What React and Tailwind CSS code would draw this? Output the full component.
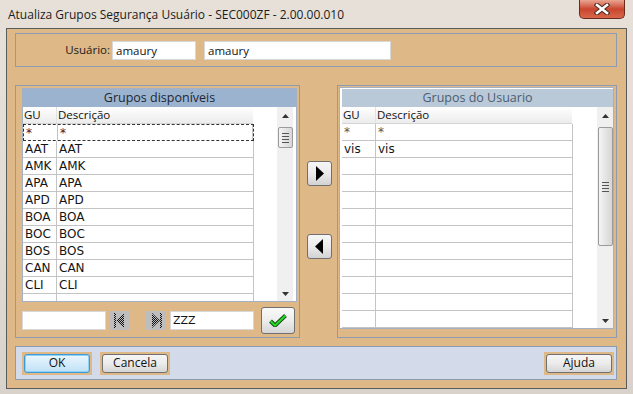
import React from "react";

const ui = { fontFamily: '"Open Sans", "Noto Sans", sans-serif' };
const mono = { fontFamily: '"DejaVu Sans", Verdana, sans-serif' };

function ScrollBar({ thumbTop, thumbH }) {
  return (
    <div className="w-[16px] h-full bg-[#f0f0f0] flex flex-col items-center">
      <div className="h-[18px] w-full flex items-center justify-center">
        <svg width="7" height="4" viewBox="0 0 7 4">
          <path d="M0 4 L3.5 0 L7 4 Z" fill="#333" />
        </svg>
      </div>
      <div
        className="w-[15px] rounded-[2px] border border-[#9a9a9a] bg-gradient-to-r from-[#f4f4f4] to-[#d6d6d6] flex flex-col items-center justify-center gap-[2px]"
        style={{ marginTop: thumbTop, height: thumbH }}
      >
        <div className="w-[7px] h-px bg-[#555]" />
        <div className="w-[7px] h-px bg-[#555]" />
        <div className="w-[7px] h-px bg-[#555]" />
        <div className="w-[7px] h-px bg-[#555]" />
      </div>
      <div className="flex-1" />
      <div className="h-[14px] w-full flex items-center justify-center">
        <svg width="7" height="4" viewBox="0 0 7 4">
          <path d="M0 0 L3.5 4 L7 0 Z" fill="#333" />
        </svg>
      </div>
    </div>
  );
}

function GridTable({ rows, count, focusFirst, muted }) {
  const list = [];
  for (let i = 0; i < count; i++) list.push(rows[i] || "");
  return (
    <div className="w-[254px] h-full flex flex-col overflow-hidden">
      <div
        className="h-[17px] shrink-0 flex w-[230px] bg-gradient-to-b from-white to-[#ececec] border-b border-[#d5d5d5] text-[11.5px] text-[#111] leading-[16px]"
        style={ui}
      >
        <div className="w-[34px] pl-[1px] border-r border-[#e2e2e2]">GU</div>
        <div className="pl-[1px]">Descrição</div>
      </div>
      {list.map((r, i) => (
        <div
          key={i}
          className={
            "h-[17px] shrink-0 flex w-[231px] border-b border-[#c4c4c4] text-[12px] leading-[16px] " +
            (i === 0 && focusFirst
              ? "border-t border-l border-r border-dashed border-t-[#333] border-l-[#333] border-r-[#333] border-b-[#333] text-[#4a1030]"
              : i === 0 && muted
              ? "text-[#555]"
              : "text-[#141414]")
          }
          style={mono}
        >
          <div className="w-[34px] pl-[2px] border-r border-[#c4c4c4]">{r}</div>
          <div className="flex-1 pl-[2px] border-r border-[#c4c4c4]">{r}</div>
        </div>
      ))}
    </div>
  );
}

function NavIcon({ dir }) {
  const id = "dots" + dir;
  return (
    <svg width="20" height="19" viewBox="0 0 20 19">
      <defs>
        <pattern id={id} width="2" height="2" patternUnits="userSpaceOnUse">
          <rect x="0" y="0" width="1" height="1" fill="#111" />
          <rect x="1" y="1" width="1" height="1" fill="#111" />
        </pattern>
      </defs>
      {dir === "first" ? (
        <g fill={"url(#" + id + ")"}>
          <rect x="4" y="2" width="2" height="15" />
          <path d="M14 2 L6 9.5 L14 17 Z" />
        </g>
      ) : (
        <g fill={"url(#" + id + ")"}>
          <rect x="14" y="2" width="2" height="15" />
          <path d="M6 2 L14 9.5 L6 17 Z" />
        </g>
      )}
    </svg>
  );
}

function WinButton({ children, focused }) {
  return (
    <div className="w-[70px] h-[23px] p-[2px] bg-[#deb887]">
      <div
        className={
          "w-full h-full rounded-[3px] border flex items-center justify-center text-[12px] text-[#111] " +
          (focused
            ? "border-[#3c9bd6] bg-gradient-to-b from-[#eaf6fd] to-[#bfe2f6] shadow-[inset_0_0_0_1px_#8fd2f5]"
            : "border-[#707070] bg-gradient-to-b from-[#f6f6f6] via-[#ebebeb] to-[#d6d6d6]")
        }
        style={ui}
      >
        {children}
      </div>
    </div>
  );
}

function ArrowButton({ dir }) {
  return (
    <div className="w-[25px] h-[25px] rounded-[3px] border border-[#707070] bg-gradient-to-b from-[#f6f6f6] via-[#ebebeb] to-[#d2d2d2] flex items-center justify-center">
      <svg width="9" height="15" viewBox="0 0 9 15">
        {dir === "right" ? (
          <path d="M1 0 L9 7.5 L1 15 Z" fill="#000" />
        ) : (
          <path d="M8 0 L0 7.5 L8 15 Z" fill="#000" />
        )}
      </svg>
    </div>
  );
}

export default function App() {
  const leftRows = ["*", "AAT", "AMK", "APA", "APD", "BOA", "BOC", "BOS", "CAN", "CLI"];
  const rightRows = ["*", "vis"];

  return (
    <div
      className="w-[633px] h-[394px] overflow-hidden bg-gradient-to-b from-[#e6e0d8] via-[#e3ddd5] to-[#d8d2ca] flex flex-col"
      style={ui}
    >
      {/* Title bar */}
      <div className="h-[28px] flex justify-between shrink-0">
        <div className="pl-[8px] pt-[6px] text-[12px] text-[#1c1c1c]">
          Atualiza Grupos Segurança Usuário - SEC000ZF - 2.00.00.010
        </div>
        <div className="mr-[8px] w-[46px] h-[19px] rounded-b-[5px] border border-t-0 border-[#6b2a1c] bg-gradient-to-b from-[#e9a592] via-[#c9452f] to-[#d8674a] flex items-center justify-center">
          <svg width="16" height="12" viewBox="0 0 16 12">
            <path d="M3 2 L13 10 M13 2 L3 10" stroke="#4a2a22" strokeWidth="4.6" strokeLinecap="square" />
            <path d="M3 2 L13 10 M13 2 L3 10" stroke="#ffffff" strokeWidth="2.6" strokeLinecap="square" />
          </svg>
        </div>
      </div>

      {/* Client area */}
      <div className="ml-[6px] w-[621px] h-[361px] border border-[#5b5b5b] bg-[#deb887] flex flex-col pl-[8px] pt-[4px]">
        {/* Usuario box */}
        <div className="w-[602px] h-[34px] border border-[#8d9bb1] flex items-center">
          <div className="w-[96px] text-right pr-[2px] text-[11.5px] text-[#1a1a1a]">Usuário:</div>
          <div className="w-[84px] h-[19px] bg-white border border-[#d7d7d7] text-[11.5px] pl-[3px] leading-[17px] text-[#111]">
            amaury
          </div>
          <div className="ml-[8px] w-[187px] h-[19px] bg-white border border-[#d7d7d7] text-[11.5px] pl-[3px] leading-[17px] text-[#111]">
            amaury
          </div>
        </div>

        {/* Main */}
        <div className="mt-[18px] flex h-[253px]">
          {/* Left group */}
          <div className="w-[285px] h-full border border-[#8d9bb1] pl-[6px] pr-[2px] pt-[2px] flex flex-col">
            <div className="w-[275px] h-[214px] border border-[#a4b1c4] bg-white flex flex-col">
              <div className="h-[18px] shrink-0 bg-[#9cb3cf] text-center text-[12.5px] leading-[18px] text-[#1c2634]">
                Grupos disponíveis
              </div>
              <div className="flex-1 flex overflow-hidden">
                <GridTable rows={leftRows} count={11} focusFirst />
                <div className="w-[3px]" />
                <ScrollBar thumbTop={2} thumbH={21} />
                <div className="w-[3px]" />
              </div>
            </div>
            <div className="mt-[5px] flex items-center">
              <div className="w-[84px] h-[19px] bg-white border border-[#d7d7d7]" />
              <div className="ml-[4px] w-[20px] h-[19px] bg-[#bdbdbd] flex items-center justify-center">
                <NavIcon dir="first" />
              </div>
              <div className="ml-[16px] w-[20px] h-[19px] bg-[#bdbdbd] flex items-center justify-center">
                <NavIcon dir="last" />
              </div>
              <div className="ml-[4px] w-[84px] h-[19px] bg-white border border-[#d7d7d7] text-[11px] pl-[2px] leading-[17px] text-[#111]" style={mono}>
                ZZZ
              </div>
              <div className="ml-[7px] w-[34px] h-[27px] rounded-[3px] border border-[#707070] bg-gradient-to-b from-[#fafafa] via-[#ededed] to-[#d6d6d6] flex items-center justify-center">
                <svg width="18" height="13" viewBox="0 0 18 13">
                  <path d="M1.5 7 L6 11.5 L16.5 1.5" fill="none" stroke="#1d4a1d" strokeWidth="4" strokeLinejoin="round" />
                  <path d="M1.5 7 L6 11.5 L16.5 1.5" fill="none" stroke="#22dd22" strokeWidth="2" strokeLinejoin="round" />
                </svg>
              </div>
            </div>
          </div>

          {/* Middle arrows */}
          <div className="w-[37px] pl-[7px] pt-[76px] flex flex-col gap-[48px]">
            <ArrowButton dir="right" />
            <ArrowButton dir="left" />
          </div>

          {/* Right group */}
          <div className="w-[280px] h-full border border-[#8d9bb1] pl-[1px] pt-[1px]">
            <div className="w-[275px] h-[242px] border border-[#a4b1c4] bg-white flex flex-col pl-[2px] pt-[1px]">
              <div className="h-[18px] shrink-0 bg-[#b9c9d8] text-center text-[12.5px] leading-[18px] text-[#4d5d70]">
                Grupos do Usuario
              </div>
              <div className="flex-1 flex overflow-hidden">
                <GridTable rows={rightRows} count={13} muted />
                <div className="w-[1px]" />
                <ScrollBar thumbTop={2} thumbH={119} />
              </div>
            </div>
          </div>
        </div>

        {/* Bottom bar */}
        <div className="mt-[8px] w-[602px] h-[34px] border border-[#8d9bb1] bg-[#d3dbea] flex items-center pl-[6px] pr-[2px]">
          <WinButton focused>OK</WinButton>
          <div className="ml-[8px]">
            <WinButton>Cancela</WinButton>
          </div>
          <div className="flex-1" />
          <WinButton>Ajuda</WinButton>
        </div>
      </div>
    </div>
  );
}
